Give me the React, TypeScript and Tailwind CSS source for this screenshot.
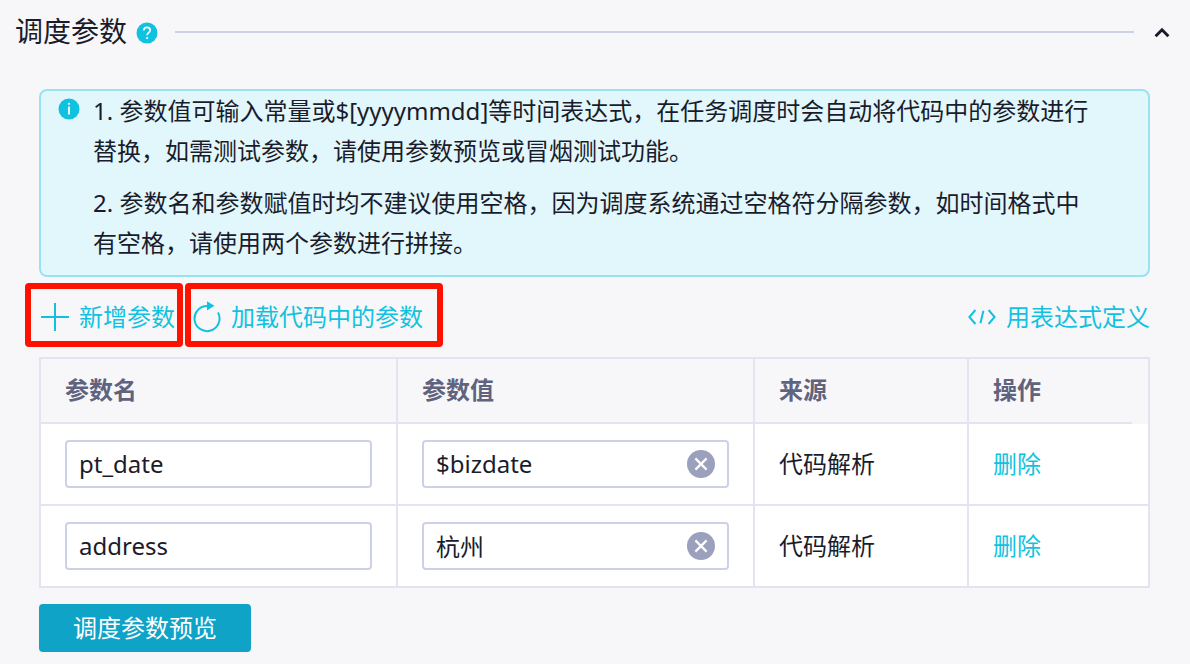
import React, { useState } from 'react';

type Param = {
  id: number;
  name: string;
  value: string;
  source: string;
};

const initialParams: Param[] = [
  { id: 1, name: 'pt_date', value: '$bizdate', source: '代码解析' },
  { id: 2, name: 'address', value: '杭州', source: '代码解析' },
];

const HelpIcon = () => (
  <svg width="20" height="22" viewBox="1 0 20 22" fill="none" overflow="visible">
    <circle cx="11" cy="11" r="10.5" fill="#11c2e0" />
    <path
      d="M7.8 8.6C7.8 6.7 9.1 5.4 11 5.4s3.2 1.2 3.2 2.9c0 2.2-3.1 2.5-3.1 4.9"
      stroke="white"
      strokeWidth="1.6"
    />
    <circle cx="11.1" cy="16" r="1.1" fill="white" />
  </svg>
);

const InfoIcon = () => (
  <svg width="22" height="22" viewBox="0 0 22 22" fill="none">
    <circle cx="11" cy="11" r="10.5" fill="#11c2e0" />
    <circle cx="11" cy="5.8" r="1.1" fill="white" />
    <path d="M11 8.4V16.4" stroke="white" strokeWidth="1.8" />
  </svg>
);

const PlusIcon = () => (
  <svg width="28" height="28" viewBox="0 0 28 28" fill="none">
    <path d="M14 0v28M0 14h28" stroke="currentColor" strokeWidth="2" />
  </svg>
);

const ReloadIcon = () => (
  <svg width="28" height="32" viewBox="0 0 28 32" fill="none">
    <path
      d="M25 11.6A12.5 12.5 0 1 1 14.6 5.1"
      stroke="currentColor"
      strokeWidth="2"
    />
    <path d="M14 0.2L21.4 4.8L14 9.6Z" fill="currentColor" />
  </svg>
);

const CodeIcon = () => (
  <svg width="28" height="16" viewBox="0 0 28 16" fill="none">
    <path
      d="M7.4 1L1.4 8l6 7M20.6 1l6 7l-6 7M15.4 1.8L12.4 14.2"
      stroke="currentColor"
      strokeWidth="2"
    />
  </svg>
);

const ClearIcon = () => (
  <svg width="28" height="28" viewBox="0 0 28 28" fill="none">
    <circle cx="14" cy="14" r="14" fill="#9ba1bd" />
    <path
      d="M8.4 8.4l11.2 11.2M19.6 8.4L8.4 19.6"
      stroke="white"
      strokeWidth="2.2"
    />
  </svg>
);

export default function App() {
  const [params, setParams] = useState<Param[]>(initialParams);
  const [open, setOpen] = useState(true);

  const updateParam = (id: number, patch: Partial<Param>) => {
    setParams(params.map((p) => (p.id === id ? { ...p, ...patch } : p)));
  };

  const addParam = () => {
    setParams([...params, { id: Date.now(), name: '', value: '', source: '' }]);
  };

  const removeParam = (id: number) => {
    setParams(params.filter((p) => p.id !== id));
  };

  const inputClass =
    'block w-full h-12 pb-[2px] rounded-sm border-2 border-[#cdd1e6] bg-white outline-none';

  return (
    <div className="min-h-screen bg-[#f7f7fa] text-2xl text-[#1b1c2b] font-['Noto_Sans','Noto_Sans_CJK_SC',sans-serif]">
      {/* Section title */}
      <header className="flex items-center h-16 pl-[15px] pr-5">
        <h2 className="pb-[2px] text-[28px] leading-10">调度参数</h2>
        <button aria-label="帮助" className="ml-[10px] pt-[2px] cursor-pointer">
          <HelpIcon />
        </button>
        <div className="flex-1 h-[2px] ml-[18px] mr-5 bg-[#cdd1e6]" />
        <button
          aria-label="收起"
          className="cursor-pointer"
          onClick={() => setOpen(!open)}
        >
          <svg width="16" height="12" viewBox="0 0 16 12" fill="none">
            <path
              d="M1.6 10.2L8 3.8l6.4 6.4"
              stroke="currentColor"
              strokeWidth="3"
            />
          </svg>
        </button>
      </header>

      {open && (
        <main className="pt-[25px] pb-3">
          {/* Tips */}
          <div className="pl-[39px] pr-10">
            <div className="flex rounded-lg border-2 border-[#96e4f1] bg-[#e2f7fc] pl-[17px] pr-12">
              <div className="shrink-0 mt-[7px] mr-[13px]">
                <InfoIcon />
              </div>
              <div className="leading-10">
                <p className="mb-3">
                  1. 参数值可输入常量或$[yyyymmdd]等时间表达式，在任务调度时会自动将代码中的参数进行替换，如需测试参数，请使用参数预览或冒烟测试功能。
                </p>
                <p className="mb-3">
                  2. 参数名和参数赋值时均不建议使用空格，因为调度系统通过空格符分隔参数，如时间格式中有空格，请使用两个参数进行拼接。
                </p>
              </div>
            </div>
          </div>

          {/* Toolbar */}
          <div className="flex items-center mt-[6px] mb-[10px] pl-[25px] pr-10 text-[#11c2e0]">
            <button
              onClick={addParam}
              className="flex items-center gap-[10px] h-16 pt-1 pl-[10px] pr-[2px] mr-[2px] rounded-sm border-6 border-[#ff1100] cursor-pointer"
            >
              <PlusIcon />
              新增参数
            </button>
            <button className="flex items-center gap-[10px] h-16 pt-1 pl-[2px] pr-[14px] rounded-sm border-6 border-[#ff1100] cursor-pointer">
              <ReloadIcon />
              加载代码中的参数
            </button>
            <button className="flex items-center gap-[10px] h-16 pt-1 ml-auto cursor-pointer">
              <CodeIcon />
              用表达式定义
            </button>
          </div>

          <div className="pl-[39px] pr-10">
            <table className="w-full table-fixed border-separate border-spacing-0 border-l-2 border-t-2 border-[#e4e3f0] bg-white text-left">
              <colgroup>
                <col />
                <col />
                <col className="w-[214px]" />
                <col className="w-[181px]" />
              </colgroup>
              <thead className="bg-[#f7f7fa] text-[#5f637e]">
                <tr className="h-[65px]">
                  <th className="px-6 pb-[2px] border-r-2 border-b-2 border-[#e4e3f0]">
                    参数名
                  </th>
                  <th className="px-6 pb-[2px] border-r-2 border-b-2 border-[#e4e3f0]">
                    参数值
                  </th>
                  <th className="px-6 pb-[2px] border-r-2 border-b-2 border-[#e4e3f0]">
                    来源
                  </th>
                  <th className="relative px-6 pb-1 border-r-2 border-[#e4e3f0] after:absolute after:left-0 after:right-4 after:bottom-0 after:h-[2px] after:bg-[#e4e3f0]">
                    操作
                  </th>
                </tr>
              </thead>
              <tbody>
                {params.map((param) => (
                  <tr key={param.id} className="h-[82px]">
                    <td className="px-6 border-r-2 border-b-2 border-[#e4e3f0]">
                      <input
                        aria-label="参数名"
                        value={param.name}
                        onChange={(e) =>
                          updateParam(param.id, { name: e.target.value })
                        }
                        className={`${inputClass} px-3`}
                      />
                    </td>
                    <td className="px-6 border-r-2 border-b-2 border-[#e4e3f0]">
                      <div className="relative">
                        <input
                          aria-label="参数值"
                          value={param.value}
                          onChange={(e) =>
                            updateParam(param.id, { value: e.target.value })
                          }
                          className={`${inputClass} pl-3 pr-12`}
                        />
                        <button
                          aria-label="清空"
                          onClick={() => updateParam(param.id, { value: '' })}
                          className="absolute right-[14px] top-[10px] cursor-pointer"
                        >
                          <ClearIcon />
                        </button>
                      </div>
                    </td>
                    <td className="px-6 border-r-2 border-b-2 border-[#e4e3f0]">
                      {param.source}
                    </td>
                    <td className="px-6 border-r-2 border-b-2 border-[#e4e3f0]">
                      <button
                        onClick={() => removeParam(param.id)}
                        className="text-[#11c2e0] cursor-pointer"
                      >
                        删除
                      </button>
                    </td>
                  </tr>
                ))}
              </tbody>
            </table>

            <button className="h-12 mt-4 px-[34px] rounded-sm bg-[#0fa3c7] text-white cursor-pointer">
              调度参数预览
            </button>
          </div>
        </main>
      )}
    </div>
  );
}
